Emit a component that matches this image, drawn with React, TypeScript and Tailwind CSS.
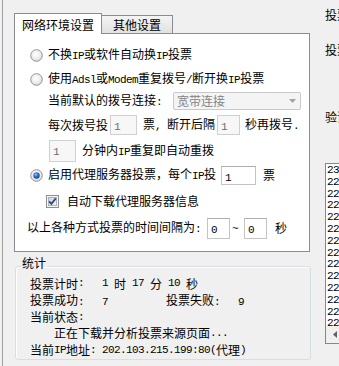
import React from "react";

function L({ t }: { t: string }) {
  const parts = t.split(/([\x20-\x7e]+)/).filter((p) => p.length > 0);
  return (
    <>
      {parts.map((p, i) =>
        /^[\x20-\x7e]+$/.test(p) ? (
          <span
            key={i}
            className="whitespace-pre font-['Liberation_Mono',monospace] text-[11px] tracking-[-0.6px]"
          >
            {p}
          </span>
        ) : (
          <span key={i}>{p}</span>
        )
      )}
    </>
  );
}

function Radio({ on, id }: { on?: boolean; id: string }) {
  return (
    <svg width="13" height="13" viewBox="0 0 13 13" className="shrink-0">
      <defs>
        <radialGradient id={id + "a"} cx="45%" cy="40%" r="65%">
          <stop offset="0" stopColor="#ffffff" />
          <stop offset="0.6" stopColor="#ececec" />
          <stop offset="1" stopColor="#cfcfcf" />
        </radialGradient>
        <radialGradient id={id + "b"} cx="40%" cy="35%" r="70%">
          <stop offset="0" stopColor="#8fc6f5" />
          <stop offset="0.5" stopColor="#2e6ac9" />
          <stop offset="1" stopColor="#173f8f" />
        </radialGradient>
      </defs>
      <circle cx="6.5" cy="6.5" r="5.8" fill={`url(#${id}a)`} stroke="#969696" strokeWidth="1" />
      {on ? <circle cx="6.5" cy="6.5" r="3.2" fill={`url(#${id}b)`} /> : null}
    </svg>
  );
}

function Check() {
  return (
    <svg width="13" height="13" viewBox="0 0 13 13" className="shrink-0">
      <defs>
        <linearGradient id="cbg" x1="0" y1="0" x2="1" y2="1">
          <stop offset="0" stopColor="#cdd1d8" />
          <stop offset="1" stopColor="#f7f7f7" />
        </linearGradient>
      </defs>
      <rect x="0.5" y="0.5" width="12" height="12" fill="#f6f6f6" stroke="#8f8f8f" />
      <rect x="2.5" y="2.5" width="8" height="8" fill="url(#cbg)" stroke="#aeb3b9" />
      <path d="M3.2 6.4 L5.4 8.9 L9.8 3.4" fill="none" stroke="#2a4585" strokeWidth="1.7" />
    </svg>
  );
}

function Box({ cls, v, disabled }: { cls: string; v: string; disabled?: boolean }) {
  return (
    <div
      className={
        disabled
          ? `${cls} shrink-0 border border-[#d0d0d0] bg-[#f7f7f7] pl-[3px] pt-[2px] leading-[13px] text-[#6d6d6d]`
          : `${cls} shrink-0 border border-[#c4c4c4] border-t-[#abadb3] bg-white pl-[3px] pt-[2px] leading-[13px] text-black`
      }
    >
      <span className="whitespace-pre font-['Liberation_Mono',monospace] text-[11px] tracking-[-0.6px]">{v}</span>
    </div>
  );
}

const rows = [
  "231.54.18.92:80",
  "222.76.214.33:8080",
  "221.130.17.40:80",
  "222.88.236.234:80",
  "221.12.147.80:3128",
  "222.66.115.233:80",
  "221.214.166.52:8080",
  "222.73.69.10:80",
  "221.7.145.42:8080",
  "222.124.5.82:3128",
  "221.203.154.26:8080",
  "222.35.137.220:80",
  "221.2.216.38:8080",
  "222.89.55.11:80",
];

export default function App() {
  return (
    <div className="flex h-[366px] w-[339px] overflow-hidden bg-[#f0f0f0] font-['Noto_Sans_CJK_SC',sans-serif] text-[12px] text-black">
      {/* left column */}
      <div className="ml-[2px] flex w-[311px] shrink-0 flex-col border-l border-[#a0a0a0] pl-[11px] pt-[13px]">
        {/* tab header */}
        <div className="flex h-[20px] items-end">
          <div className="relative z-10 -mb-px flex h-[21px] w-[88px] items-center justify-center border border-b-0 border-[#898c95] bg-white pt-[1px] leading-[16px]">
            网络环境设置
          </div>
          <div className="flex h-[18px] w-[71px] items-center justify-center border border-b-0 border-l-0 border-[#898c95] bg-linear-to-b from-[#f4f4f4] to-[#e1e1e1] pt-[1px] leading-[16px]">
            其他设置
          </div>
        </div>
        {/* tab panel */}
        <div className="flex h-[219px] w-[296px] flex-col border border-[#898c95] bg-white pt-[9px] leading-[16px]">
          <div className="flex h-[24px] items-center pl-[15px]">
            <Radio id="r1" />
            <span className="ml-[5px] whitespace-nowrap">
              <L t="不换IP或软件自动换IP投票" />
            </span>
          </div>
          <div className="flex h-[24px] items-center pl-[15px]">
            <Radio id="r2" />
            <span className="ml-[5px] whitespace-nowrap">
              <L t="使用Adsl或Modem重复拨号/断开换IP投票" />
            </span>
          </div>
          <div className="flex h-[20px] items-center pl-[33px]">
            <span className="w-[125px] shrink-0 whitespace-nowrap">
              <L t="当前默认的拨号连接:" />
            </span>
            <div className="flex h-[18px] w-[128px] items-center justify-between rounded-[2px] border border-[#c9c9c9] bg-[#f4f4f4] pl-[3px] pr-[4px] text-[#838383]">
              <span>宽带连接</span>
              <svg width="7" height="4" viewBox="0 0 7 4">
                <path d="M0 0 H7 L3.5 4 Z" fill="#a3a3a3" />
              </svg>
            </div>
          </div>
          <div className="flex h-[28px] items-center pl-[33px]">
            <span className="whitespace-nowrap">每次拨号投</span>
            <div className="ml-[2px]">
              <Box cls="w-[27px] h-[20px]" v="1" disabled />
            </div>
            <span className="ml-[6px] whitespace-nowrap">
              <L t="票, 断开后隔" />
            </span>
            <div className="ml-[2px]">
              <Box cls="w-[23px] h-[20px]" v="1" disabled />
            </div>
            <span className="ml-[5px] whitespace-nowrap">
              <L t="秒再拨号." />
            </span>
          </div>
          <div className="flex h-[24px] items-center pl-[34px]">
            <Box cls="w-[27px] h-[22px]" v="1" disabled />
            <span className="ml-[6px] whitespace-nowrap">
              <L t="分钟内IP重复即自动重拨" />
            </span>
          </div>
          <div className="flex h-[24px] items-center pl-[15px]">
            <Radio id="r3" on />
            <span className="ml-[5px] w-[168px] shrink-0 whitespace-nowrap">
              <L t="启用代理服务器投票，每个IP投" />
            </span>
            <div className="ml-[5px]">
              <Box cls="w-[35px] h-[19px]" v="1" />
            </div>
            <span className="ml-[7px]">票</span>
          </div>
          <div className="flex h-[28px] items-center pl-[31px]">
            <Check />
            <span className="ml-[8px] whitespace-nowrap">自动下载代理服务器信息</span>
          </div>
          <div className="flex h-[26px] items-center pl-[12px]">
            <span className="shrink-0 whitespace-nowrap">
              <L t="以上各种方式投票的时间间隔为:" />
            </span>
            <div className="ml-[6px]">
              <Box cls="w-[23px] h-[21px]" v="0" />
            </div>
            <span className="ml-[2px]">
              <L t="~" />
            </span>
            <div className="ml-[6px]">
              <Box cls="w-[23px] h-[21px]" v="0" />
            </div>
            <span className="ml-[8px]">秒</span>
          </div>
        </div>
        {/* statistics group */}
        <fieldset className="ml-[1px] mt-[5px] w-[296px] rounded-[3px] border border-[#d5dfe5] shadow-[inset_1px_1px_0_#ffffff]">
          <legend className="ml-[5px] px-[1px] pb-[6px] leading-[12px]">统计</legend>
          <div className="flex flex-col pl-[14px]">
            <div className="flex h-[17px] items-center whitespace-nowrap">
              <L t="投票计时:   1 时 17 分 10 秒" />
            </div>
            <div className="flex h-[17px] items-center whitespace-nowrap">
              <span className="w-[136px] shrink-0">
                <L t="投票成功:   7" />
              </span>
              <span>
                <L t="投票失败:   9" />
              </span>
            </div>
            <div className="flex h-[16px] items-center whitespace-nowrap">
              <L t="当前状态:" />
            </div>
            <div className="flex h-[16px] items-center whitespace-nowrap">
              <L t="    正在下载并分析投票来源页面..." />
            </div>
            <div className="flex h-[18px] items-center whitespace-nowrap">
              <L t="当前IP地址: 202.103.215.199:80(代理)" />
            </div>
          </div>
        </fieldset>
      </div>
      {/* right column */}
      <div className="flex w-[60px] shrink-0 flex-col pl-[12px] pt-[7px] leading-[16px]">
        <div className="h-[16px] whitespace-nowrap">
          <L t="投票网址:" />
        </div>
        <div className="mt-[19px] h-[16px] whitespace-nowrap">
          <L t="投票数量:" />
        </div>
        <div className="mt-[51px] h-[16px] whitespace-nowrap">
          <L t="验证码:" />
        </div>
        <div className="mt-[38px] flex h-[181px] w-[80px] flex-col border border-[#828790] bg-white">
          <div className="flex-1 overflow-hidden pl-[1px] pt-[1px]">
            {rows.map((r, i) => (
              <div
                key={i}
                className="h-[11.8px] whitespace-pre font-['Liberation_Mono',monospace] text-[11px] leading-[11.8px] tracking-[-0.6px]"
              >
                {r}
              </div>
            ))}
          </div>
          <div className="flex h-[17px] shrink-0 bg-[#f0f0f0]">
            <div className="flex h-[17px] w-[17px] items-center justify-center">
              <svg width="4" height="7" viewBox="0 0 4 7">
                <path d="M4 0 V7 L0 3.5 Z" fill="#606060" />
              </svg>
            </div>
          </div>
        </div>
      </div>
    </div>
  );
}
